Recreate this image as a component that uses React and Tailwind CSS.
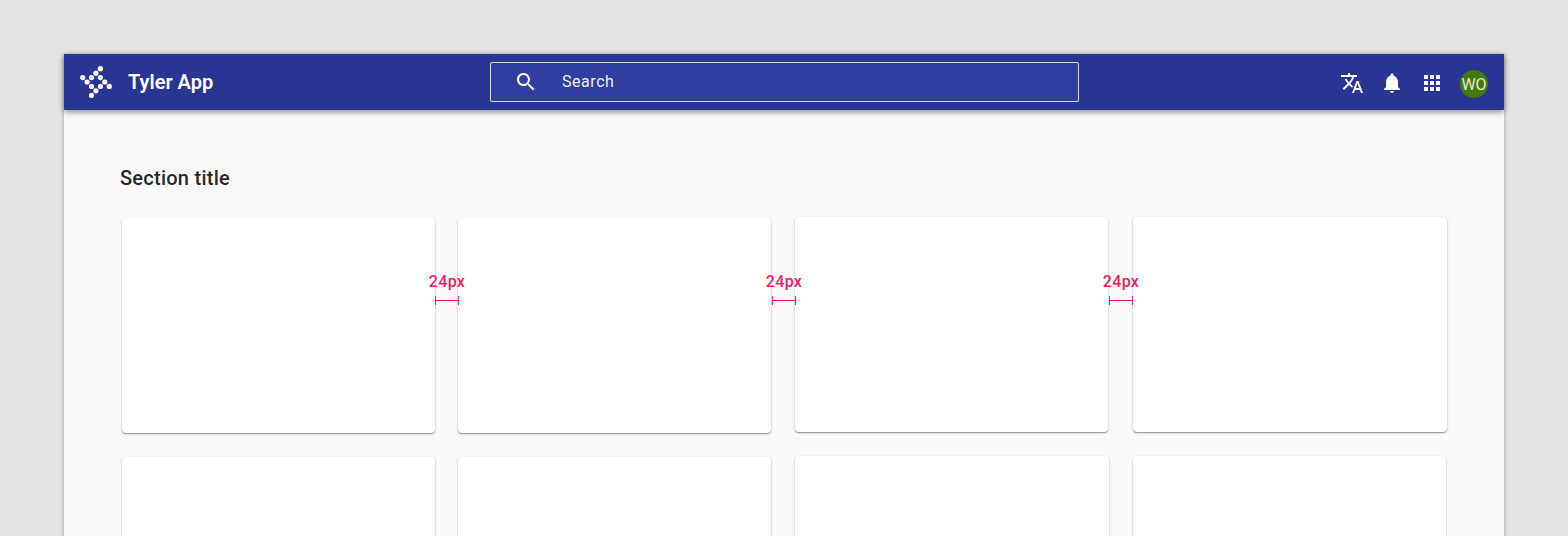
const DOTS = [
  [20.4, 2.7], [15.9, 7.2], [2.7, 11.6], [11.5, 11.6], [20.4, 11.6], [7.1, 16],
  [24.8, 16], [11.5, 20.4], [20.4, 20.4], [29.3, 20.4], [15.9, 24.8], [11.5, 29.3],
];

function Logo() {
  return (
    <svg className="h-8 w-8 shrink-0" viewBox="0 0 32 32" fill="white">
      {DOTS.map(([cx, cy]) => (
        <circle key={`${cx}-${cy}`} cx={cx} cy={cy} r="2.6" />
      ))}
    </svg>
  );
}

function Icon({ d }) {
  return (
    <svg className="h-6 w-6 shrink-0" viewBox="0 0 24 24" fill="white">
      <path d={d} />
    </svg>
  );
}

const SEARCH = "M15.5 14h-.79l-.28-.27C15.41 12.59 16 11.11 16 9.5 16 5.91 13.09 3 9.5 3S3 5.91 3 9.5 5.91 16 9.5 16c1.61 0 3.09-.59 4.23-1.57l.27.28v.79l5 4.99L20.49 19l-4.99-5zm-6 0C7.01 14 5 11.99 5 9.5S7.01 5 9.5 5 14 7.01 14 9.5 11.99 14 9.5 14z";
const TRANSLATE = "M12.87 15.07l-2.54-2.51.03-.03c1.74-1.94 2.98-4.17 3.71-6.53H17V4h-7V2H8v2H1v1.99h11.17C11.5 7.92 10.44 9.75 9 11.35 8.07 10.32 7.3 9.19 6.69 8h-2c.73 1.63 1.73 3.17 2.98 4.56l-5.09 5.02L4 19l5-5 3.11 3.11.76-2.04zM18.5 10h-2L12 22h2l1.12-3h4.75L21 22h2l-4.5-12zm-2.62 7l1.62-4.33L19.12 17h-3.24z";
const BELL = "M12 22c1.1 0 2-.9 2-2h-4c0 1.1.89 2 2 2zm6-6v-5c0-3.07-1.64-5.64-4.5-6.32V4c0-.83-.67-1.5-1.5-1.5s-1.5.67-1.5 1.5v.68C7.63 5.36 6 7.92 6 11v5l-2 2v1h16v-1l-2-2z";
const APPS = "M4 8h4V4H4v4zm6 12h4v-4h-4v4zm-6 0h4v-4H4v4zm0-6h4v-4H4v4zm6 0h4v-4h-4v4zm6-10v4h4V4h-4zm-6 4h4V4h-4v4zm6 6h4v-4h-4v4zm0 6h4v-4h-4v4z";

function Card({ className = "w-[313px]" }) {
  return (
    <div className={`h-[215px] shrink-0 rounded bg-white shadow-[0_1px_1px_rgba(0,0,0,0.3),0_1px_3px_rgba(0,0,0,0.2)] ${className}`} />
  );
}

function Measure({ className }) {
  return (
    <div className={`absolute top-[218px] flex w-9 flex-col items-center text-[#e91e63] ${className}`}>
      <span className="whitespace-nowrap text-base leading-5 font-medium tracking-[0.35px]">24px</span>
      <span className="mt-1 flex h-[9px] w-6 items-center border-x border-[#e91e63]">
        <span className="h-px w-full bg-[#e91e63]" />
      </span>
    </div>
  );
}

export default function App() {
  return (
    <div className="h-[536px] w-[1568px] overflow-hidden bg-[#e4e4e4] px-16 pt-[54px] font-[Roboto,sans-serif]">
      <div className="relative h-[600px] bg-[#fafafa] shadow-[0_1px_4px_rgba(0,0,0,0.3)]">
        <header className="relative flex h-14 items-center bg-[#283593] px-4 text-white shadow-[0_2px_6px_rgba(0,0,0,0.45)]">
          <Logo />
          <h1 className="ml-4 w-[346px] text-xl font-semibold whitespace-nowrap">Tyler App</h1>
          <div className="ml-4 flex h-10 w-[589px] items-center rounded-xs border border-white/80 bg-[#303f9f] pl-[23px]">
            <Icon d={SEARCH} />
            <span className="ml-6 text-base tracking-[0.55px] text-white/95">Search</span>
          </div>
          <div className="mt-0.5 ml-auto flex items-center gap-4">
            <Icon d={TRANSLATE} />
            <Icon d={BELL} />
            <Icon d={APPS} />
            <div className="mt-0.5 flex h-7 w-7 items-center justify-center rounded-full bg-[#437a05] pt-0.5 text-base text-white/85">WO</div>
          </div>
        </header>
        <main className="pt-[54px] pl-14">
          <h2 className="text-xl leading-7 font-medium tracking-[0.25px] text-black/87">Section title</h2>
          <div className="mt-[25px] flex pl-0.5">
            <div className="mt-px flex flex-col gap-6">
              <Card />
              <Card />
            </div>
            <div className="mt-px ml-[23px] flex flex-col gap-6">
              <Card />
              <Card />
            </div>
            <div className="ml-6 flex flex-col gap-6">
              <Card />
              <Card className="w-[314px]" />
            </div>
            <div className="ml-6 flex flex-col gap-6">
              <Card className="w-[314px]" />
              <Card />
            </div>
          </div>
        </main>
        <Measure className="left-[365px]" />
        <Measure className="left-[702px]" />
        <Measure className="left-[1039px]" />
      </div>
    </div>
  );
}
